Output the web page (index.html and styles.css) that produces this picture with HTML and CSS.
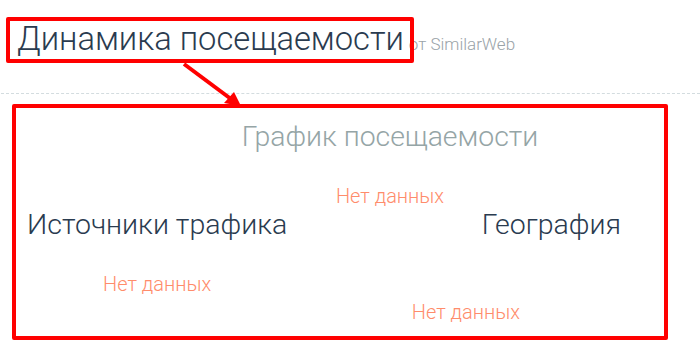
FILE: index.html
```html
<!DOCTYPE html>
<html lang="ru">
<head>
<meta charset="utf-8">
<link rel="stylesheet" href="styles.css">
</head>
<body>
<div class="page">
  <header class="head">
    <h1 class="title">Динамика посещаемости</h1>
    <span class="source">от SimilarWeb</span>
  </header>
  <hr class="divider">
  <section class="panel">
    <div class="traffic">
      <h2 class="chart-title">График посещаемости</h2>
      <p class="empty">Нет данных</p>
    </div>
    <div class="cols">
      <div class="col col-left">
        <h2 class="col-title">Источники трафика</h2>
        <p class="empty">Нет данных</p>
      </div>
      <div class="col col-right">
        <h2 class="col-title">География</h2>
        <p class="empty">Нет данных</p>
      </div>
    </div>
  </section>
  <div class="mark-title"></div>
  <svg class="arrow" width="70" height="50" viewBox="0 0 70 50">
    <line x1="3" y1="2" x2="50" y2="37" stroke="#ff0000" stroke-width="4"/>
    <polygon points="60,44 43,41 53,30" fill="#ff0000"/>
  </svg>
</div>
</body>
</html>
```
FILE: styles.css
```css
* { box-sizing: border-box; }
html, body { margin: 0; padding: 0; background: #fff; }
body { font-family: Roboto, "Noto Sans", sans-serif; }
.page { position: relative; width: 700px; height: 352px; overflow: hidden; }
.head { display: flex; align-items: baseline; padding: 19px 0 0 17px; height: 59px; }
.title { margin: 0; font-size: 32.7px; line-height: 40px; font-weight: 300; color: #2a3b4f; }
.source { margin-left: 5px; font-size: 17px; font-weight: 300; color: #9aa3a8; }
.divider { margin: 34px 0 0 1px; border: 0; border-top: 1px dashed #d3dcdf; height: 0; }
.panel { margin: 10px 0 0 12px; width: 656px; height: 236px; border: 4px solid #ff0000; border-radius: 2px; display: flex; flex-direction: column; }
.traffic { display: flex; flex-direction: column; align-items: center; padding-left: 100px; }
.chart-title { margin: 12px 0 0; font-size: 28.4px; line-height: 34px; font-weight: 300; color: #95a5a6; }
.empty { margin: 0; font-size: 20px; line-height: 22px; font-weight: 300; color: #ff8c6b; }
.traffic .empty { margin-top: 31px; }
.cols { display: flex; justify-content: space-between; margin-top: 1px; }
.col { display: flex; flex-direction: column; }
.col-title { margin: 0; font-size: 28.5px; line-height: 34px; font-weight: 300; color: #2a3b4f; }
.col-left { padding-left: 11px; align-items: center; }
.col-left .empty { margin-top: 31px; }
.col-right { padding-right: 43px; align-items: flex-end; }
.col-right .empty { margin-top: 59px; margin-right: 101px; }
.mark-title { position: absolute; left: 6px; top: 17px; width: 408px; height: 46px; border: 4px solid #ff0000; border-radius: 2px; }
.arrow { position: absolute; left: 181px; top: 62px; }
```
